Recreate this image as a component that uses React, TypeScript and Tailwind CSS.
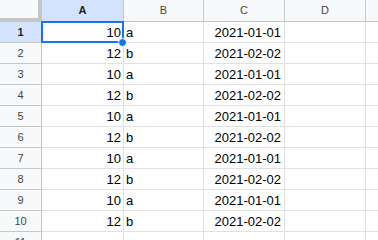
import React from "react";

const rows = Array.from({ length: 10 }, (_, i) =>
  i % 2 === 0
    ? { n: "10", s: "a", d: "2021-01-01" }
    : { n: "12", s: "b", d: "2021-02-02" }
);

export default function App() {
  const font = { fontFamily: '"Liberation Sans", Arial, sans-serif' };
  return (
    <div
      className="relative w-[378px] h-[240px] overflow-hidden bg-white text-black"
      style={font}
    >
      {/* header row */}
      <div className="flex h-[22px]">
        <div className="w-[42px] shrink-0 bg-[#f8f9fa] border-r-4 border-b-4 border-[#c4c7c5] box-border" />
        <div className="w-[82px] shrink-0 bg-[#d3e3fd] border-r border-b border-[#c4c7c5] flex items-center justify-center text-[11px] font-bold text-[#1f1f1f]">
          A
        </div>
        <div className="w-[80px] shrink-0 bg-[#f8f9fa] border-r border-b border-[#c4c7c5] flex items-center justify-center text-[11px] text-[#444746]">
          B
        </div>
        <div className="w-[81px] shrink-0 bg-[#f8f9fa] border-r border-b border-[#c4c7c5] flex items-center justify-center text-[11px] text-[#444746]">
          C
        </div>
        <div className="w-[81px] shrink-0 bg-[#f8f9fa] border-r border-b border-[#c4c7c5] flex items-center justify-center text-[11px] text-[#444746]">
          D
        </div>
        <div className="flex-1 bg-[#f8f9fa] border-b border-[#c4c7c5]" />
      </div>
      {rows.map((r, i) => (
        <div key={i} className="flex h-[21px]">
          <div
            className={
              i === 0
                ? "w-[42px] shrink-0 bg-[#d3e3fd] border-r border-b border-[#c4c7c5] flex items-center justify-center text-[11px] font-bold text-[#1f1f1f]"
                : "w-[42px] shrink-0 bg-[#f8f9fa] border-r border-b border-[#c4c7c5] flex items-center justify-center text-[11px] text-[#444746]"
            }
          >
            {i + 1}
          </div>
          <div className="w-[82px] shrink-0 border-r border-b border-[#e1e1e1] flex items-center justify-end pr-[2px] text-[13px] pt-[1px]">
            {r.n}
          </div>
          <div className="w-[80px] shrink-0 border-r border-b border-[#e1e1e1] flex items-center pl-[2px] text-[13px] pt-[1px]">
            {r.s}
          </div>
          <div className="w-[81px] shrink-0 border-r border-b border-[#e1e1e1] flex items-center justify-end pr-[3px] text-[13px] pt-[1px]">
            {r.d}
          </div>
          <div className="w-[81px] shrink-0 border-r border-b border-[#e1e1e1]" />
          <div className="flex-1 border-b border-[#e1e1e1]" />
        </div>
      ))}
      <div className="flex h-[21px]">
        <div className="w-[42px] shrink-0 bg-[#f8f9fa] border-r border-[#c4c7c5] flex items-center justify-center text-[11px] text-[#444746]">
          11
        </div>
        <div className="w-[82px] shrink-0 border-r border-[#e1e1e1]" />
        <div className="w-[80px] shrink-0 border-r border-[#e1e1e1]" />
        <div className="w-[81px] shrink-0 border-r border-[#e1e1e1]" />
        <div className="w-[81px] shrink-0 border-r border-[#e1e1e1]" />
        <div className="flex-1" />
      </div>
      {/* selection overlay */}
      <div className="absolute left-[41px] top-[21px] w-[83px] h-[22px] border-2 border-[#1a73e8] pointer-events-none" />
      <div className="absolute left-[118px] top-[38px] w-[9px] h-[9px] rounded-full bg-[#1a73e8] border border-white" />
    </div>
  );
}
